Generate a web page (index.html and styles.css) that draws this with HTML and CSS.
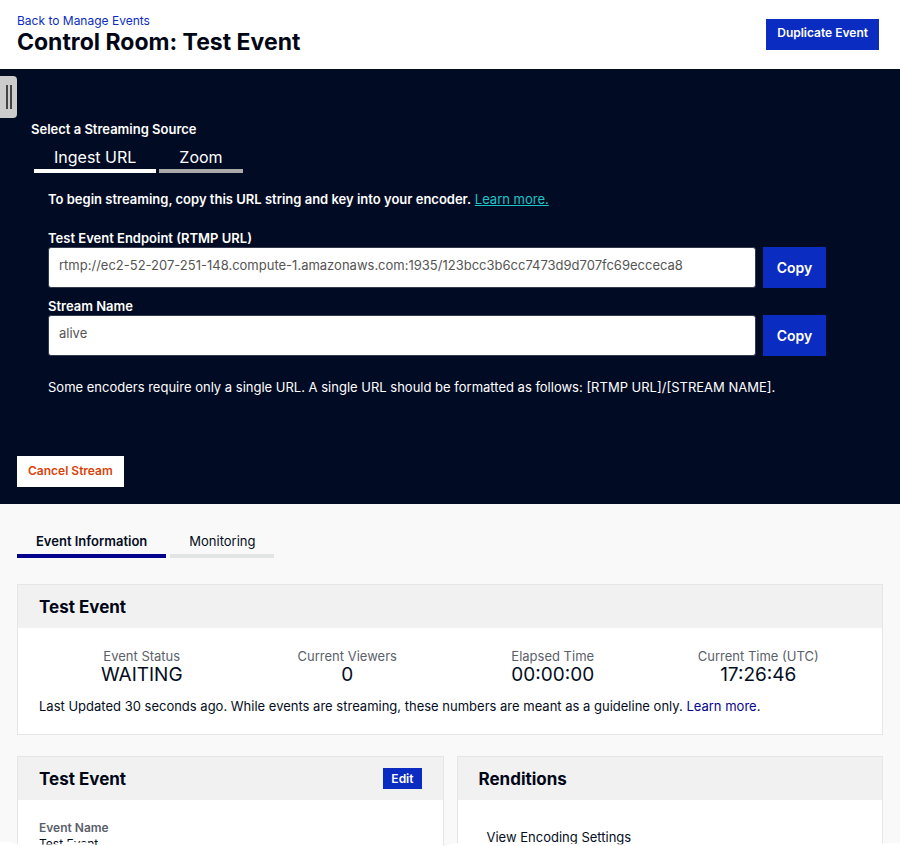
FILE: index.html
```html
<!DOCTYPE html>
<html lang="en">
<head>
<meta charset="utf-8">
<meta name="viewport" content="width=device-width, initial-scale=1">
<title>Control Room: Test Event</title>
<link rel="stylesheet" href="styles.css">
</head>
<body>
<header class="topbar">
  <div>
    <a class="back" href="#">Back to Manage Events</a>
    <h1>Control Room: Test Event</h1>
  </div>
  <button class="btn" type="button">Duplicate Event</button>
</header>

<section class="stream">
  <button class="drawer" type="button" aria-label="Open panel"><span></span><span></span></button>
  <div class="source">
    <h2>Select a Streaming Source</h2>
    <nav class="source-tabs">
      <button class="active" type="button">Ingest URL</button>
      <button type="button">Zoom</button>
    </nav>
    <div class="ingest">
      <p class="intro"><strong>To begin streaming, copy this URL string and key into your encoder.</strong> <a href="#">Learn more.</a></p>
      <div class="field">
        <label for="endpoint">Test Event Endpoint (RTMP URL)</label>
        <div class="row">
          <input id="endpoint" type="text" readonly value="rtmp://ec2-52-207-251-148.compute-1.amazonaws.com:1935/123bcc3b6cc7473d9d707fc69ecceca8">
          <button class="btn copy" type="button">Copy</button>
        </div>
      </div>
      <div class="field">
        <label for="stream">Stream Name</label>
        <div class="row">
          <input id="stream" type="text" readonly value="alive">
          <button class="btn copy" type="button">Copy</button>
        </div>
      </div>
      <p class="note">Some encoders require only a single URL. A single URL should be formatted as follows: [RTMP URL]/[STREAM NAME].</p>
    </div>
  </div>
  <button class="btn cancel" type="button">Cancel Stream</button>
</section>

<main>
  <nav class="tabs">
    <button class="active" type="button">Event Information</button>
    <button type="button">Monitoring</button>
  </nav>

  <section class="card">
    <header><h3>Test Event</h3></header>
    <div class="card-body">
      <dl class="stats">
        <div><dt>Event Status</dt><dd>WAITING</dd></div>
        <div><dt>Current Viewers</dt><dd>0</dd></div>
        <div><dt>Elapsed Time</dt><dd>00:00:00</dd></div>
        <div><dt>Current Time (UTC)</dt><dd>17:26:46</dd></div>
      </dl>
      <p class="updated">Last Updated 30 seconds ago. While events are streaming, these numbers are meant as a guideline only. <a href="#">Learn more</a>.</p>
    </div>
  </section>

  <div class="columns">
    <section class="card">
      <header><h3>Test Event</h3><button class="btn edit" type="button">Edit</button></header>
      <dl class="card-body details">
        <dt>Event Name</dt>
        <dd>Test Event</dd>
      </dl>
    </section>
    <section class="card">
      <header><h3>Renditions</h3></header>
      <div class="card-body renditions">View Encoding Settings</div>
    </section>
  </div>
</main>
<svg class="torn-edge" viewBox="0 0 900 6" preserveAspectRatio="none" aria-hidden="true">
  <path fill="#fff" d="M0 3Q8 0 15 4L30 5 62 4 66 2 72 1 78 3 84 2 90 3 96 5 140 5 300 4 443 6 450 4 458 3 600 4 660 5 880 4 890 3 900 3V6H0Z"/>
</svg>
</body>
</html>
```
FILE: styles.css
```css
* { box-sizing: border-box; }

body {
  margin: 0;
  height: 100vh;
  overflow: hidden;
  background: #f9f9f9;
  color: #040d22;
  font: 13px/16px Inter, "Liberation Sans", sans-serif;
}

h1, h2, h3, p, dl, dd { margin: 0; }
button, input { font: inherit; color: inherit; }
button { border: 0; background: none; cursor: pointer; }
h2, strong, label { font-weight: 600; }

.topbar {
  display: flex;
  justify-content: space-between;
  align-items: center;
  padding: 12px 21px 13px 17px;
  background: #fff;
}
.topbar a { display: block; font-size: 12px; line-height: 17px; color: #0a2cc0; text-decoration: none; }
h1 { font-size: 23px; line-height: 27px; font-weight: 700; color: #000616; }

.btn {
  height: 31px;
  padding: 0 11px 2px;
  background: #0a2cc0;
  color: #fff;
  font-size: 12px;
  font-weight: 600;
}

.stream {
  position: relative;
  padding: 52px 17px 17px;
  background: #020b24;
  color: #fff;
}
.drawer {
  position: absolute;
  top: 7px;
  left: 0;
  display: flex;
  justify-content: center;
  align-items: center;
  gap: 2px;
  width: 17px;
  height: 42px;
  padding: 0;
  border-radius: 0 4px 4px 0;
  background: #ccc;
}
.drawer span { width: 2px; height: 24px; background: #444; }

.source { padding: 0 57px 0 14px; }
h2 { font-size: 13px; line-height: 16px; }
.source-tabs { display: flex; gap: 3px; margin: 8px 3px 0; }
.source-tabs button {
  padding: 0 20px;
  border-bottom: 4px solid #aaa;
  font-size: 16px;
  line-height: 24px;
}
.source-tabs .active { border-color: #fff; }

.ingest { padding: 18px 0 0 17px; }
.intro { margin-bottom: 22px; line-height: 17px; }
.intro a { color: #1cc5c5; }
.field { margin-bottom: 10px; }
.field label { display: block; line-height: 17px; }
.row { display: flex; gap: 7px; }
.row input {
  flex: 1;
  min-width: 0;
  height: 41px;
  padding: 0 10px 5px;
  border: 1px solid #333a4e;
  border-radius: 3px;
  background: #fff;
  color: #555;
}
.copy { width: 63px; height: 41px; padding: 0; font-size: 14px; }
.note { padding-top: 13px; line-height: 17px; }
.cancel { display: block; margin-top: 60px; background: #fff; color: #d9430b; }

main { padding: 24px 17px; }
.tabs { display: flex; gap: 4px; margin-bottom: 26px; }
.tabs button { padding: 0 19px; border-bottom: 4px solid #e3e5e5; line-height: 26px; }
.tabs .active { border-color: #04048c; font-weight: 600; }

.card { border: 1px solid #e6e6e6; background: #fff; }
.card header {
  display: flex;
  justify-content: space-between;
  align-items: center;
  height: 43px;
  padding: 0 21px;
  background: #f1f1f1;
}
h3 { font-size: 17px; line-height: 24px; color: #000616; }
.card-body { padding: 20px 21px; }
.stats { display: grid; grid-template-columns: repeat(4, 1fr); text-align: center; }
dt { line-height: 16px; color: #5b5f6b; }
.stats dd { font-size: 19px; line-height: 21px; }
.updated { margin-top: 13px; line-height: 16px; }
.updated a { color: #04048c; text-decoration: none; }

.columns { display: grid; grid-template-columns: 1fr 1fr; gap: 13px; margin-top: 21px; }
.edit { height: 21px; padding: 0 8px; }
.details dt { font-size: 12px; font-weight: 600; }
.details dd { font-size: 12px; }
.renditions { padding: 29px; }

.torn-edge {
  position: fixed;
  left: 0;
  bottom: 0;
  width: 100%;
  height: 6px;
}
```
